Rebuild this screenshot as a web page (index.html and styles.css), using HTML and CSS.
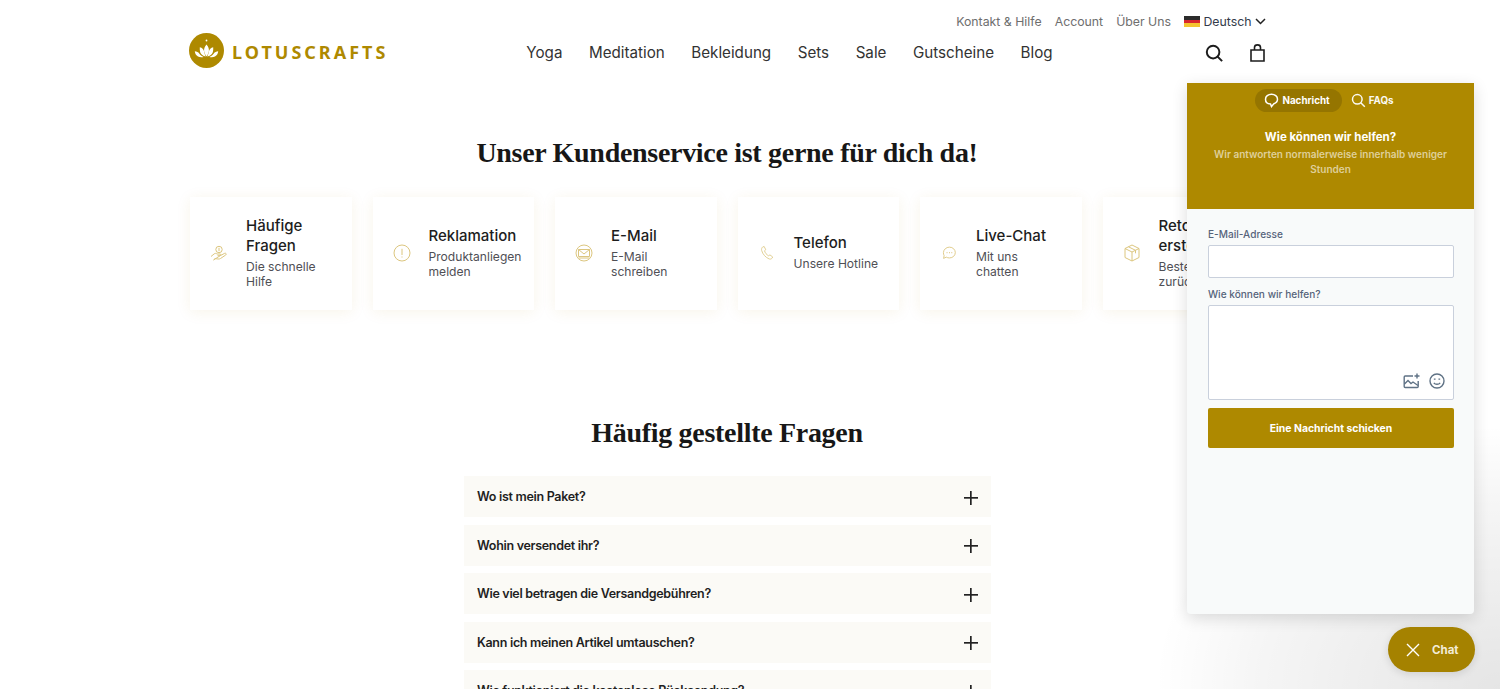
FILE: index.html
```html
<!DOCTYPE html>
<html lang="de">
<head>
    <meta charset="utf-8" />
    <title>Lotuscrafts Kundenservice</title>
    <link rel="stylesheet" href="styles.css">
</head>
<body>
    <header class="site-header">
        <nav class="top-links">
            <a>Kontakt &amp; Hilfe</a>
            <a>Account</a>
            <a>Über Uns</a>
            <span class="lang">
                <span class="flag"><i></i><i></i><i></i></span>
                Deutsch
                <svg width="11" height="7" viewBox="0 0 11 7" fill="none" stroke="#222" stroke-width="1.5"><path d="M1 1l4.5 4.5L10 1"/></svg>
            </span>
        </nav>
        <div class="main-bar">
            <a class="logo">
                <svg width="35" height="35" viewBox="0 0 35 35">
                    <circle cx="17.5" cy="17.5" r="17.5" fill="#ae8900"/>
                    <circle cx="17.5" cy="7.5" r="0.9" fill="#fff"/>
                    <g fill="#fff">
                        <path d="M17.5 11.5c2 2.4 2.8 4.8 2.3 7.2-.4 1.8-1.2 3.400-2.300 4.800-1.100-1.400-1.900-3-2.300-4.800-.5-2.400.3-4.800 2.300-7.200z"/>
                        <path d="M10.800 14.200c2.300.6 3.900 1.800 4.300 4.300.3 1.900 1 3.500 1.700 5-2.800-.6-4.900-2-5.600-4.300-.4-1.500-.6-3.300-.4-5z"/>
                        <path d="M24.200 14.200c-2.300.6-3.900 1.800-4.300 4.300-.3 1.900-1 3.500-1.700 5 2.800-.6 4.900-2 5.600-4.300.4-1.500.6-3.300.4-5z"/>
                        <path d="M5.800 18.200c1.900.1 3.500.8 4.400 2.400.9 1.500 2.500 2.700 4.500 3.300-3.600.7-6.500-.1-7.900-2.300-.5-1-.9-2.200-1-3.400z"/>
                        <path d="M29.200 18.200c-1.900.1-3.500.8-4.400 2.400-.9 1.500-2.500 2.700-4.500 3.300 3.600.7 6.500-.1 7.900-2.300.5-1 .9-2.200 1-3.400z"/>
                    </g>
                </svg>
                <span class="logo-text">LOTUSCRAFTS</span>
            </a>
            <nav class="main-nav">
                <a>Yoga</a>
                <a>Meditation</a>
                <a>Bekleidung</a>
                <a>Sets</a>
                <a>Sale</a>
                <a>Gutscheine</a>
                <a>Blog</a>
            </nav>
            <div class="shop-icons">
                <svg width="18" height="18" viewBox="0 0 20 20" fill="none" stroke="#1d1d1d" stroke-width="2.2"><circle cx="9" cy="9" r="7"/><path d="M14 14l5 5"/></svg>
                <svg width="15" height="18" viewBox="0 0 15 18" fill="none" stroke="#1d1d1d" stroke-width="1.600"><path d="M1 6h13v11H1zM4.500 6V3.500a3 2.600 0 0 1 6 0V6"/></svg>
            </div>
        </div>
    </header>

    <main>
        <h1 class="heading">Unser Kundenservice ist gerne für dich da!</h1>
        <section class="cards">
            <div class="card">
                <svg class="card-icon" viewBox="0 0 18 18"><path d="M1 12.500l3-2.500c1-.8 2-.8 3 0h3c1.200 0 1.200 1.700 0 1.700H7.500M10.500 11.500l4.200-2.200c1.300-.5 2 .9 1 1.700l-5.200 3.500c-.8.500-1.500.6-2.400.5l-3-.4-1.500 1.300z"/><circle cx="9" cy="5.500" r="3.200"/><path d="M9 3.800v3.400"/></svg>
                <div><h3>Häufige Fragen</h3><p>Die schnelle Hilfe</p></div>
            </div>
            <div class="card">
                <svg class="card-icon" viewBox="0 0 18 18"><circle cx="9" cy="9" r="8"/><path d="M9 4.800v6.200M9 12.500v1"/></svg>
                <div><h3>Reklamation</h3><p>Produktanliegen melden</p></div>
            </div>
            <div class="card">
                <svg class="card-icon" viewBox="0 0 18 18"><circle cx="9" cy="9" r="8"/><path d="M3.500 5.500h11v7h-11zM3.500 5.500L9 10l5.500-4.500M3.500 14h11"/></svg>
                <div><h3>E-Mail</h3><p>E-Mail<br>schreiben</p></div>
            </div>
            <div class="card">
                <svg class="card-icon" viewBox="-2 -2 22 22"><path d="M3.600 1.800L5.500 1l2 4-1.500 1.200c.6 2.600 2.500 5 5 6.200l1.600-1.100 3.400 2.600-1 1.600c-.8 1-2.200 1.200-3.500.7C7 14.200 3.800 10.500 2.500 6c-.4-1.700 0-3.300 1.100-4.200z"/></svg>
                <div><h3>Telefon</h3><p>Unsere Hotline</p></div>
            </div>
            <div class="card">
                <svg class="card-icon" viewBox="-1 -1 20 20"><path d="M9.500 2.500c3.700 0 6.500 2.700 6.500 6s-2.800 6-6.500 6c-1.300 0-2.500-.3-3.500-.9L3 15l.6-3.100C3 10.900 2.800 9.700 2.800 8.500c.2-3.300 3-6 6.700-6z"/><path class="dots" d="M6.500 8.500h.6M9.200 8.500h.6M11.900 8.500h.6"/></svg>
                <div><h3>Live-Chat</h3><p>Mit uns<br>chatten</p></div>
            </div>
            <div class="card">
                <svg class="card-icon" viewBox="0 0 18 18"><path d="M9 1l7 3.500v9L9 17l-7-3.500v-9zM2 4.500L9 8l7-3.500M9 8v9M5.500 2.800l7 3.500v3"/></svg>
                <div><h3>Retoure erstellen</h3><p>Bestellung zurücksenden</p></div>
            </div>
        </section>

        <h2 class="heading faq-heading">Häufig gestellte Fragen</h2>
        <section class="faq">
            <div class="faq-row">Wo ist mein Paket?<span class="plus"></span></div>
            <div class="faq-row">Wohin versendet ihr?<span class="plus"></span></div>
            <div class="faq-row">Wie viel betragen die Versandgebühren?<span class="plus"></span></div>
            <div class="faq-row">Kann ich meinen Artikel umtauschen?<span class="plus"></span></div>
            <div class="faq-row">Wie funktioniert die kostenlose Rücksendung?<span class="plus"></span></div>
        </section>
    </main>

    <!-- chat widget, lies over the page -->
    <div class="chat-glow"></div>
    <aside class="chat">
        <div class="chat-head">
            <div class="chat-tabs">
                <span class="tab active">
                    <svg width="15" height="15" viewBox="0 0 15 15" fill="none" stroke="#fff" stroke-width="1.500"><path d="M7.500 1.200c3.400 0 6 2.200 6 5 0 2.300-1.700 3.800-3.700 4.600l-2.300 2.700-1-2.500C3.500 10.800 1.500 8.800 1.500 6.200c0-2.800 2.600-5 6-5z"/></svg>
                    Nachricht
                </span>
                <span class="tab">
                    <svg width="15" height="15" viewBox="0 0 15 15" fill="none" stroke="#fff" stroke-width="1.500"><circle cx="6.300" cy="6.300" r="4.800"/><path d="M9.800 9.800l4 4"/></svg>
                    FAQs
                </span>
            </div>
            <h4>Wie können wir helfen?</h4>
            <p>Wir antworten normalerweise innerhalb weniger Stunden</p>
        </div>
        <form class="chat-form">
            <label>E-Mail-Adresse</label>
            <div class="field"></div>
            <label>Wie können wir helfen?</label>
            <div class="field area">
                <svg width="18" height="16" viewBox="0 0 18 16" fill="none" stroke="#5f7285" stroke-width="1.400"><path d="M10 3H2.200a1 1 0 0 0-1 1v9.500a1 1 0 0 0 1 1h12a1 1 0 0 0 1-1V8"/><path d="M1.500 11l3.500-3.500 3 3 2-1.500 5 3.500"/><path d="M14 .5v5M11.500 3h5" stroke="#5f7285"/></svg>
                <svg width="16" height="16" viewBox="0 0 16 16" fill="none" stroke="#5f7285" stroke-width="1.400"><circle cx="8" cy="8" r="7"/><path d="M4.800 9.800c1.500 2 4.900 2 6.400 0"/><path d="M5.700 5.500v1.300M10.300 5.500v1.300" stroke-width="1.700"/></svg>
            </div>
            <div class="send">Eine Nachricht schicken</div>
        </form>
    </aside>
    <div class="chat-btn">
        <svg width="14" height="14" viewBox="0 0 14 14" fill="none" stroke="#fff" stroke-width="1.400"><path d="M1 1l12 12M13 1L1 13"/></svg>
        Chat
    </div>
</body>
</html>
```

FILE: styles.css
```css
* {
    box-sizing: border-box;
}

html, body {
    margin: 0;
    height: 689px;
    overflow: hidden;
}

body {
    font-family: "Inter", "Liberation Sans", sans-serif;
    color: #1d1d1d;
    background: #fff;
    position: relative;
}

/* header */
.site-header {
    width: 1080px;
    margin-left: 189px;
    height: 83px;
}

.top-links {
    display: flex;
    justify-content: flex-end;
    align-items: center;
    gap: 13px;
    height: 28px;
    padding: 15px 3px 0 0;
    font-size: 12.300px;
    color: #6e6e6e;
}

.lang {
    display: flex;
    align-items: center;
    gap: 3.500px;
    color: #333b4a;
}

.flag {
    width: 16px;
    height: 11px;
    display: flex;
    flex-direction: column;
}

.flag i { flex: 1; }
.flag i:nth-child(1) { background: #2b2b2b; }
.flag i:nth-child(2) { background: #d8262c; }
.flag i:nth-child(3) { background: #f4c430; }

.main-bar {
    display: flex;
    align-items: center;
    height: 35px;
    margin-top: 5px;
}

.logo {
    display: flex;
    align-items: center;
    gap: 8px;
}

.logo-text {
    font-family: "Noto Sans", sans-serif;
    font-weight: 700;
    font-size: 18px;
    letter-spacing: 3px;
    padding-top: 2px;
    color: #ae8900;
}

.main-nav {
    display: flex;
    gap: 26.500px;
    margin-left: 138px;
    padding-top: 4px;
    font-size: 15.200px;
    color: #333;
}

.shop-icons {
    display: flex;
    align-items: center;
    gap: 27px;
    margin-left: auto;
    padding: 4px 4px 0 0;
}

/* content */
.heading {
    font-family: "Liberation Serif", serif;
    font-weight: 700;
    font-size: 28px;
    letter-spacing: -0.300px;
    line-height: 36px;
    text-align: center;
    color: #171717;
    width: 1076px;
    margin: 0 0 0 189px;
}

main > .heading:first-child {
    padding-top: 52px;
    height: 114px;
}

.cards {
    display: flex;
    gap: 21px;
    margin-left: 190px;
    width: 1200px;
}

.card {
    flex: 0 0 161.500px;
    min-width: 0;
    height: 113px;
    background: #fff;
    box-shadow: 0 2px 14px rgba(174, 137, 0, 0.09);
    display: flex;
    align-items: center;
    padding: 0 8px 2.500px 20px;
    gap: 18px;
}

.card-icon {
    width: 18px;
    height: 18px;
    flex: none;
    margin-top: 2px;
    fill: none;
    stroke: #dcc67f;
    stroke-width: 1;
}

.card-icon .dots {
    stroke: #c9a93f;
    stroke-width: 1.500;
}

.card h3 {
    margin: 0 0 3px;
    font-size: 15px;
    line-height: 20px;
    font-weight: 500;
    color: #1d1d1d;
}

.card p {
    margin: 0;
    font-size: 12.100px;
    line-height: 15px;
    color: #4f4f55;
}

.faq-heading {
    margin-top: 105px;
}

.faq {
    width: 527px;
    margin: 25px 0 0 464px;
    display: flex;
    flex-direction: column;
    gap: 7.500px;
}

.faq-row {
    height: 41px;
    flex: none;
    background: #fbfaf6;
    display: flex;
    align-items: center;
    justify-content: space-between;
    padding: 0 13px;
    font-size: 12.500px;
    letter-spacing: -0.300px;
    font-weight: 600;
    color: #1f1f1f;
}

.plus {
    width: 14px;
    height: 14px;
    margin-top: 2px;
    background:
        linear-gradient(#222, #222) center / 100% 1.700px no-repeat,
        linear-gradient(#222, #222) center / 1.700px 100% no-repeat;
}

/* chat widget */
.chat-glow {
    position: absolute;
    right: 0;
    bottom: 0;
    width: 340px;
    height: 260px;
    background: radial-gradient(ellipse at 100% 100%, rgba(0, 0, 0, 0.10), rgba(0, 0, 0, 0.04) 50%, rgba(0, 0, 0, 0) 72%);
}

.chat {
    position: absolute;
    left: 1187px;
    top: 83px;
    width: 287px;
    height: 531px;
    background: #f8fafa;
    border-radius: 0 0 4px 4px;
    box-shadow: 0 4px 16px rgba(0, 0, 0, 0.14);
    overflow: hidden;
}

.chat-head {
    height: 126px;
    background: #ae8900;
    color: #fff;
    text-align: center;
    padding-top: 6px;
}

.chat-tabs {
    display: flex;
    justify-content: center;
    align-items: center;
    font-size: 9.800px;
    font-weight: 700;
    margin-bottom: 17px;
}

.tab {
    display: flex;
    align-items: center;
    gap: 3px;
    height: 23px;
    padding: 0 12px 0 9px;
    border-radius: 12px;
    opacity: 0.95;
}

.tab.active {
    background: #957500;
    opacity: 1;
}

.chat-head h4 {
    margin: 0 0 2px;
    font-size: 11.500px;
    line-height: 16px;
    font-weight: 700;
}

.chat-head p {
    margin: 0 auto;
    width: 250px;
    font-size: 10px;
    line-height: 15px;
    font-weight: 600;
    color: #dfcf99;
}

.chat-form {
    padding: 18px 20px 0 21px;
    display: flex;
    flex-direction: column;
    font-size: 10.100px;
    color: #56647a;
}

.chat-form label {
    line-height: 14px;
    margin-bottom: 4px;
    font-weight: 500;
}

.field {
    height: 33px;
    background: #fff;
    border: 1px solid #c9d0dc;
    border-radius: 2px;
    margin-bottom: 9px;
}

.field.area {
    height: 95px;
    margin-bottom: 8px;
    display: flex;
    justify-content: flex-end;
    align-items: flex-end;
    gap: 8px;
    padding: 0 8px 10px;
}

.send {
    height: 40px;
    background: #ae8900;
    color: #fff;
    border-radius: 2px;
    display: flex;
    align-items: center;
    justify-content: center;
    font-size: 10.400px;
    font-weight: 700;
}

.chat-btn {
    position: absolute;
    left: 1388px;
    top: 627px;
    width: 87px;
    height: 45px;
    border-radius: 23px;
    background: #a58200;
    color: #f3ecd6;
    display: flex;
    align-items: center;
    gap: 12px;
    padding-left: 18px;
    font-size: 11.500px;
    font-weight: 700;
    box-shadow: 0 2px 8px rgba(0, 0, 0, 0.12);
}
```
